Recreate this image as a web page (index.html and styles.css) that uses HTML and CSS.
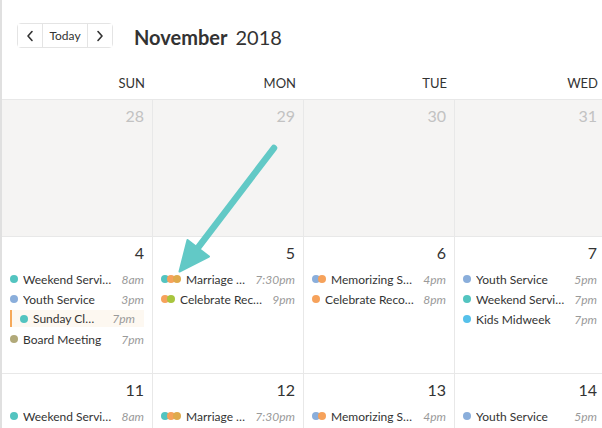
FILE: index.html
```html
<!DOCTYPE html>
<html>
<head>
<meta charset="utf-8">
<link rel="stylesheet" href="styles.css">
</head>
<body>
<div class="app">
  <div class="toolbar">
    <div class="nav">
      <button class="nav-btn icon"><svg width="8" height="12" viewBox="0 0 8 12"><polyline points="6,1.5 2,6 6,10.5" fill="none" stroke="#333" stroke-width="1.6" stroke-linecap="round" stroke-linejoin="round"/></svg></button>
      <button class="nav-btn today">Today</button>
      <button class="nav-btn icon"><svg width="8" height="12" viewBox="0 0 8 12"><polyline points="2,1.5 6,6 2,10.5" fill="none" stroke="#333" stroke-width="1.6" stroke-linecap="round" stroke-linejoin="round"/></svg></button>
    </div>
    <h1 class="title"><strong>November</strong><span class="year">2018</span></h1>
  </div>

  <div class="grid">
    <div class="dow">SUN</div><div class="dow">MON</div><div class="dow">TUE</div><div class="dow">WED</div><div class="dow">THU</div><div class="dow">FRI</div><div class="dow">SAT</div>

    <div class="cell past"><div class="num">28</div></div>
    <div class="cell past"><div class="num">29</div></div>
    <div class="cell past"><div class="num">30</div></div>
    <div class="cell past"><div class="num">31</div></div>
    <div class="cell"><div class="num">1</div></div>
    <div class="cell"><div class="num">2</div></div>
    <div class="cell"><div class="num">3</div></div>

    <div class="cell">
      <div class="num">4</div>
      <div class="ev"><span class="dots"><i class="dot teal"></i></span><span class="name">Weekend Service</span><span class="time">8am</span></div>
      <div class="ev"><span class="dots"><i class="dot blue"></i></span><span class="name">Youth Service</span><span class="time">3pm</span></div>
      <div class="ev hl"><span class="dots"><i class="dot teal"></i></span><span class="name">Sunday Class</span><span class="time">7pm</span></div>
      <div class="ev"><span class="dots"><i class="dot olive"></i></span><span class="name">Board Meeting</span><span class="time">7pm</span></div>
    </div>
    <div class="cell">
      <div class="num">5</div>
      <div class="ev"><span class="dots"><i class="dot teal"></i><i class="dot orange"></i><i class="dot mustard"></i></span><span class="name">Marriage Class</span><span class="time">7:30pm</span></div>
      <div class="ev"><span class="dots"><i class="dot orange"></i><i class="dot green"></i></span><span class="name">Celebrate Recovery</span><span class="time">9pm</span></div>
    </div>
    <div class="cell">
      <div class="num">6</div>
      <div class="ev"><span class="dots"><i class="dot blue"></i><i class="dot orange"></i></span><span class="name">Memorizing Scripture</span><span class="time">4pm</span></div>
      <div class="ev"><span class="dots"><i class="dot orange"></i></span><span class="name">Celebrate Recovery</span><span class="time">8pm</span></div>
    </div>
    <div class="cell">
      <div class="num">7</div>
      <div class="ev"><span class="dots"><i class="dot blue"></i></span><span class="name">Youth Service</span><span class="time">5pm</span></div>
      <div class="ev"><span class="dots"><i class="dot teal"></i></span><span class="name">Weekend Service</span><span class="time">7pm</span></div>
      <div class="ev"><span class="dots"><i class="dot sky"></i></span><span class="name">Kids Midweek</span><span class="time">7pm</span></div>
    </div>
    <div class="cell"><div class="num">8</div></div>
    <div class="cell"><div class="num">9</div></div>
    <div class="cell"><div class="num">10</div></div>

    <div class="cell">
      <div class="num">11</div>
      <div class="ev"><span class="dots"><i class="dot teal"></i></span><span class="name">Weekend Service</span><span class="time">8am</span></div>
    </div>
    <div class="cell">
      <div class="num">12</div>
      <div class="ev"><span class="dots"><i class="dot teal"></i><i class="dot orange"></i><i class="dot mustard"></i></span><span class="name">Marriage Class</span><span class="time">7:30pm</span></div>
    </div>
    <div class="cell">
      <div class="num">13</div>
      <div class="ev"><span class="dots"><i class="dot blue"></i><i class="dot orange"></i></span><span class="name">Memorizing Scripture</span><span class="time">4pm</span></div>
    </div>
    <div class="cell">
      <div class="num">14</div>
      <div class="ev"><span class="dots"><i class="dot blue"></i></span><span class="name">Youth Service</span><span class="time">5pm</span></div>
    </div>
    <div class="cell"><div class="num">15</div></div>
    <div class="cell"><div class="num">16</div></div>
    <div class="cell"><div class="num">17</div></div>
  </div>

  <svg class="arrow" width="602" height="428" viewBox="0 0 602 428">
    <line x1="274" y1="148" x2="197" y2="249" stroke="#62c9c6" stroke-width="6.5" stroke-linecap="round"/>
    <polygon points="179.5,271.5 187.5,240 209,256.5" fill="#62c9c6" stroke="#62c9c6" stroke-width="2" stroke-linejoin="round"/>
  </svg>
</div>
</body>
</html>
```

FILE: styles.css
```css
html, body {
  margin: 0;
  padding: 0;
  background: #fff;
  overflow: hidden;
}

body {
  font-family: Lato, "Open Sans", sans-serif;
  color: #333;
  width: 602px;
  height: 428px;
}

.app {
  position: relative;
  height: 428px;
  border-left: 2px solid #e0e0e0;
  overflow: hidden;
}

.toolbar {
  display: flex;
  align-items: center;
  padding: 23px 0 0 15px;
  height: 25px;
}

.nav {
  display: flex;
  height: 25px;
  border: 1px solid #e4e4e4;
  border-radius: 4px;
  box-sizing: border-box;
}

.nav-btn {
  display: flex;
  align-items: center;
  justify-content: center;
  height: 23px;
  margin: 0;
  padding: 0;
  border: 0;
  background: #fff;
  font-family: Lato, sans-serif;
  font-size: 12px;
  color: #333;
}

.nav-btn.icon {
  width: 24px;
}

.nav-btn.today {
  width: 46px;
  border-left: 1px solid #e4e4e4;
  border-right: 1px solid #e4e4e4;
}

.title {
  margin: 0 0 0 21px;
  font-size: 20px;
  font-weight: 400;
  line-height: 26px;
  padding-top: 3px;
  color: #333;
}

.title strong {
  font-weight: 700;
}

.year {
  margin-left: 8px;
}

.grid {
  display: grid;
  grid-template-columns: repeat(7, 151px);
  grid-auto-rows: 137px;
  grid-template-rows: 52px;
  width: 1057px;
}

.dow {
  display: flex;
  align-items: flex-end;
  justify-content: flex-end;
  padding: 0 8px 7px 0;
  font-size: 13px;
  line-height: 18px;
  color: #333;
  border-bottom: 1px solid #e8e8e8;
}

.cell {
  box-sizing: border-box;
  border-right: 1px solid #e8e8e8;
  border-bottom: 1px solid #e8e8e8;
  padding: 7px 8px 0 8px;
  min-width: 0;
}

.cell.past {
  background: #f5f4f3;
}

.num {
  text-align: right;
  font-size: 16px;
  line-height: 18px;
  height: 18px;
  margin-bottom: 7px;
  color: #333;
}

.past .num {
  color: #c2c2c2;
}

.ev {
  display: flex;
  align-items: center;
  height: 20px;
  font-size: 12px;
  white-space: nowrap;
}

.ev.hl {
  background: #fdf8f1;
  border-left: 2px solid #f6a95a;
  padding: 0 9px 0 8px;
  height: 17px;
  margin: 1px 0 2px 0;
}

.ev.hl .time {
  margin-left: 13px;
}

.dots {
  display: flex;
  flex-shrink: 0;
  margin-right: 5px;
}

.dot {
  display: block;
  width: 8px;
  height: 8px;
  border-radius: 50%;
}

.dot + .dot {
  margin-left: -2px;
}

.teal { background: #53c4c0; }
.orange { background: #f6a25b; }
.mustard { background: #dfaa4c; }
.green { background: #a8c53e; }
.blue { background: #8aaedb; }
.sky { background: #56c1ea; }
.olive { background: #b1a979; }

.name {
  flex: 1;
  min-width: 0;
  overflow: hidden;
  text-overflow: ellipsis;
  color: #333;
}

.time {
  flex-shrink: 0;
  margin-left: 8px;
  font-style: italic;
  color: #9a9a9a;
}

.arrow {
  position: absolute;
  left: -2px;
  top: 0;
  pointer-events: none;
}
```
